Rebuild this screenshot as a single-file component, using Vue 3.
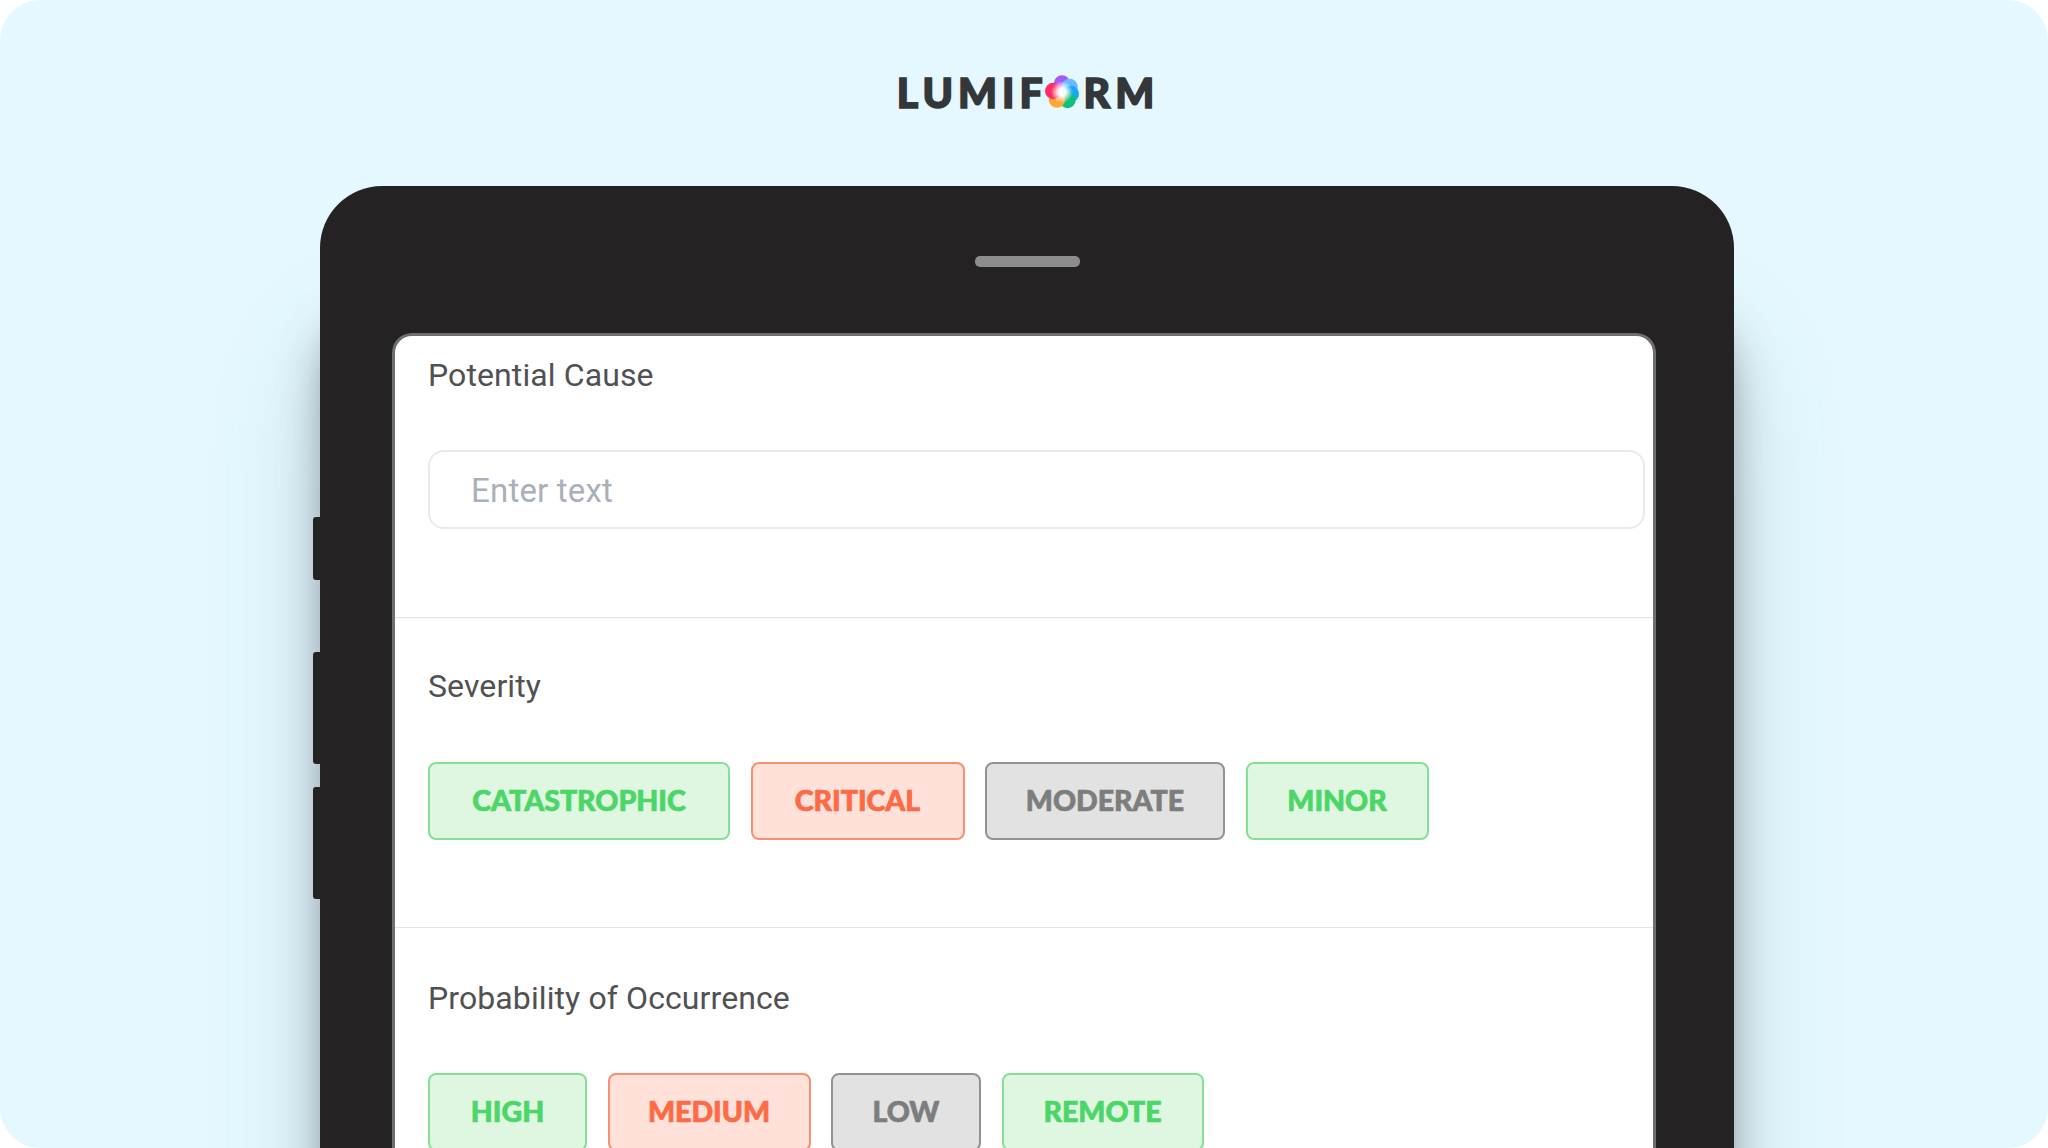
<script setup>
const rows = [
  { title: 'Severity', opts: [['CATASTROPHIC', 'good', 302], ['CRITICAL', 'bad', 214], ['MODERATE', 'mid', 240], ['MINOR', 'good', 183]] },
  { title: 'Probability of Occurrence', opts: [['HIGH', 'good', 159], ['MEDIUM', 'bad', 203], ['LOW', 'mid', 150], ['REMOTE', 'good', 202]] }
]
const petals = [
  { cx: 0, cy: -8.5, fill: '#a45cf0' },
  { cx: 7.6, cy: -5, fill: '#6cb8ff' },
  { cx: 8.8, cy: 2, fill: '#12a8f5' },
  { cx: 5.5, cy: 8, fill: '#0fbf7e' },
  { cx: -5, cy: 7.6, fill: '#ffa736' },
  { cx: -8.8, cy: -1, fill: '#ff2f66' }
]
</script>

<template>
  <div class="page">
    <header class="brand">
      <span>LUMIF</span>
      <svg class="flower" viewBox="-17 -17 34 34" aria-hidden="true">
        <defs>
          <radialGradient id="glow">
            <stop offset="0" stop-color="#fff" />
            <stop offset=".35" stop-color="#fff" stop-opacity=".95" />
            <stop offset="1" stop-color="#fff" stop-opacity="0" />
          </radialGradient>
        </defs>
        <circle v-for="(p, i) in petals" :key="i" :cx="p.cx" :cy="p.cy" r="8.2" :fill="p.fill" />
        <circle cx="0" cy="0" r="11" fill="url(#glow)" />
      </svg>
      <span>RM</span>
    </header>

    <main class="device">
      <i class="key k1"></i>
      <i class="key k2"></i>
      <i class="key k3"></i>
      <div class="speaker"></div>
      <section class="screen">
        <div class="block first">
          <h2>Potential Cause</h2>
          <div class="field">Enter text</div>
        </div>
        <div v-for="r in rows" :key="r.title" class="block">
          <h2>{{ r.title }}</h2>
          <div class="opts">
            <div v-for="o in r.opts" :key="o[0]" class="opt" :class="o[1]" :style="{ width: o[2] + 'px' }">{{ o[0] }}</div>
          </div>
        </div>
      </section>
    </main>
  </div>
</template>

<style>
html, body { margin: 0; background: #fff; }
</style>

<style scoped>
.page {
  width: 2048px;
  height: 1148px;
  box-sizing: border-box;
  overflow: hidden;
  border-radius: 40px;
  background: #e5f8ff;
  display: flex;
  flex-direction: column;
  align-items: center;
  font-family: "Lato", sans-serif;
}
.brand {
  height: 186px;
  flex: none;
  display: flex;
  align-items: center;
  justify-content: center;
  padding-bottom: 2px;
  box-sizing: border-box;
  font: 900 41px/1 "Lato", sans-serif;
  letter-spacing: 5px;
  color: #33373a;
  -webkit-text-stroke: 1.6px #33373a;
  margin-left: 8px;
}
.flower { width: 34px; height: 34px; margin: 0 5px 0 -3px; }
.device {
  position: relative;
  flex: none;
  width: 1414px;
  height: 1100px;
  margin-left: 6px;
  box-sizing: border-box;
  padding: 147px 78px 0 72px;
  background: #242223;
  border-radius: 62px;
  box-shadow: 0 130px 44px -6px rgba(45, 50, 55, .5), 0 150px 120px -6px rgba(70, 100, 120, .2);
}
.speaker {
  position: absolute;
  top: 70px;
  left: 655px;
  width: 105px;
  height: 11px;
  border-radius: 5px;
  background: #8d8d8d;
}
.key {
  position: absolute;
  left: -7px;
  width: 7px;
  background: #242223;
  border-radius: 3px 0 0 3px;
}
.k1 { top: 331px; height: 63px; }
.k2 { top: 466px; height: 112px; }
.k3 { top: 601px; height: 112px; }
.screen {
  height: 900px;
  background: #fff;
  border: 3px solid #6f6f6f;
  border-bottom: 0;
  border-radius: 20px 20px 0 0;
  box-sizing: border-box;
  color: #4b4c4e;
}
.block {
  padding: 0 8px 0 33px;
  height: 310px;
  border-top: 1px solid #e3e3e3;
  box-sizing: border-box;
}
.block.first { height: 281px; border-top: 0; }
h2 {
  margin: 0;
  padding-top: 48px;
  font: 400 32px/40px "Roboto", sans-serif;
  letter-spacing: .1px;
  color: #505153;
}
.first h2 { padding-top: 19px; }
.block:last-child h2 { padding-top: 50px; }
.field {
  margin-top: 55px;
  height: 79px;
  box-sizing: border-box;
  padding-left: 41px;
  border: 2px solid #e9eaec;
  border-radius: 16px;
  font: 400 33px/77px "Roboto", sans-serif;
  letter-spacing: .2px;
  color: #aab0ba;
}
.opts { display: flex; gap: 20.5px; margin-top: 56px; }
.block:last-child .opts { margin-top: 55px; }
.opt {
  flex: none;
  height: 78px;
  box-sizing: border-box;
  border-radius: 8px;
  border: 2px solid;
  font: 900 28.5px/72px "Lato", sans-serif;
  text-align: center;
  -webkit-text-stroke: .7px currentColor;
}
.good { background: #dff7e0; border-color: #86df97; color: #4cd668; }
.bad { background: #ffe1d9; border-color: #f78f72; color: #fc6b45; }
.mid { background: #e2e2e2; border-color: #929292; color: #7d7d7d; }
</style>
